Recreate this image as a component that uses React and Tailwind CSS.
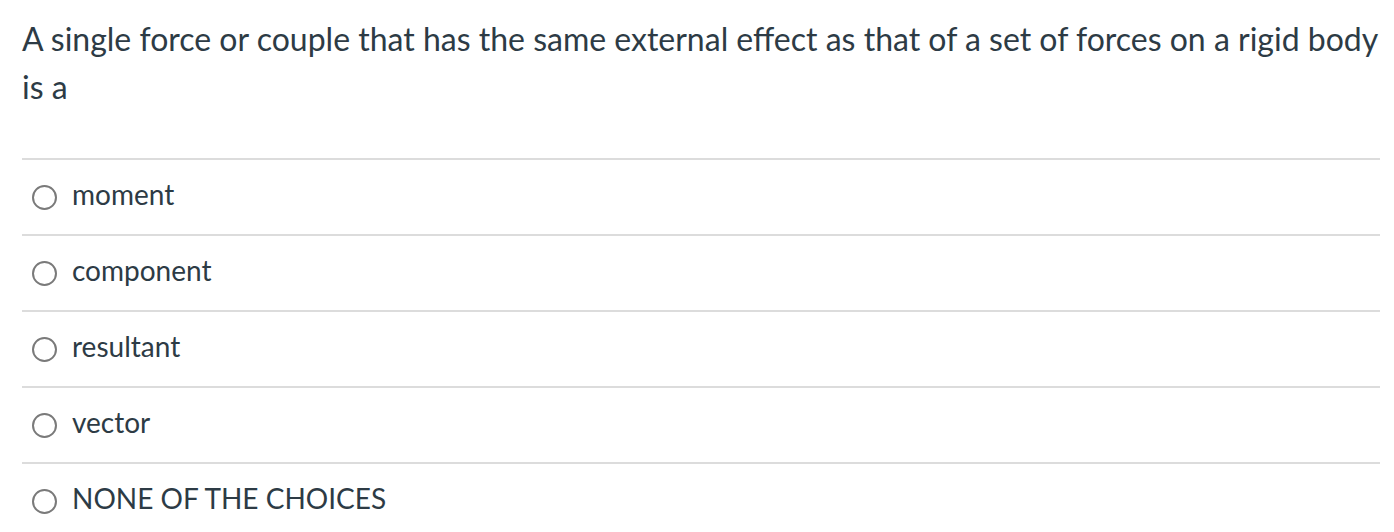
import React, { useState } from 'react';

const choices = ['moment', 'component', 'resultant', 'vector', 'NONE OF THE CHOICES'];

const App = () => {
  const [selected, setSelected] = useState(null);

  return (
    <div
      className="min-h-[532px] bg-white pl-[22px] pr-[14px] pt-[15px] text-[#2d3b45]"
      style={{ fontFamily: 'Lato, "Noto Sans", sans-serif' }}
    >
      {/* Question */}
      <p className="text-[32px] leading-[48px]">
        A single force or couple that has the same external effect as that of a set of forces on a rigid body is a
      </p>

      {/* Answers */}
      <div className="mt-[47px]">
        {choices.map((choice, i) => (
          <label
            key={i}
            className="flex h-[76px] cursor-pointer items-center border-t-2 border-[#dcdcdc] pl-[10px]"
            onClick={() => setSelected(i)}
          >
            <span
              className={`flex h-[25px] w-[25px] shrink-0 items-center justify-center rounded-full border-2 ${
                selected === i ? 'border-[#0374b5]' : 'border-[#7a7a7a]'
              }`}
            >
              {selected === i && <span className="h-[13px] w-[13px] rounded-full bg-[#0374b5]" />}
            </span>
            <span className="mb-[6px] ml-[15px] text-[28px] leading-[36px]">{choice}</span>
          </label>
        ))}
      </div>
    </div>
  );
};

export default App;
